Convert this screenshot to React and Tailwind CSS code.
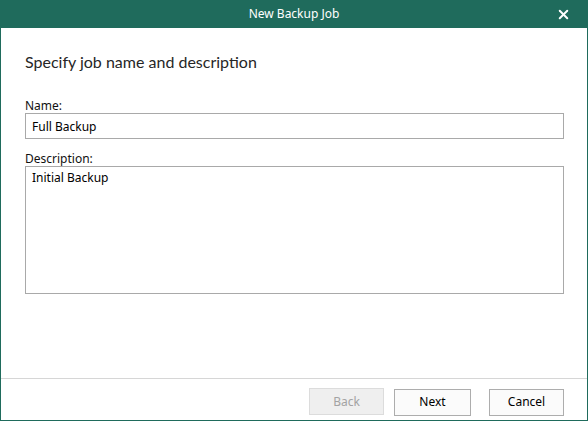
import { X } from "lucide-react";

const FONT = { fontFamily: '"Noto Sans", "Open Sans", sans-serif' };

function Button({ children, disabled, width }) {
  return (
    <button
      type="button"
      disabled={disabled}
      className={
        (disabled
          ? "h-[27px] border border-[#dcdcdc] bg-[#efefef] text-[12px] text-[#a3a3a3] "
          : "h-[27px] border border-[#adadad] bg-[#fbfbfb] text-[12px] text-black ") + width
      }
    >
      {children}
    </button>
  );
}

export default function App() {
  return (
    <div className="w-[588px] h-[421px] flex flex-col bg-white" style={FONT}>
      {/* Title bar */}
      <div className="relative h-[28px] shrink-0 bg-[#1f6b5c] flex items-center justify-center">
        <span className="text-[12px] text-white leading-none">New Backup Job</span>
        <X className="absolute right-[17px] top-[7px] w-[15px] h-[15px] text-white" strokeWidth={3.2} />
      </div>

      {/* Body */}
      <div className="flex-1 flex flex-col border-x border-b border-[#1f6b5c]">
        <div className="flex-1 pl-[24px] pr-[23px]">
          <h1
            className="mt-[22px] text-[16px] leading-[24px] font-normal text-[#262626]"
            style={{ fontFamily: 'Lato, "Noto Sans", sans-serif' }}
          >
            Specify job name and description
          </h1>

          <label className="block mt-[24px] text-[12px] leading-[15px] text-[#111]">Name:</label>
          <input
            readOnly
            defaultValue="Full Backup"
            className="block w-full h-[26px] border border-[#a9a9a9] px-[6px] text-[12px] text-black outline-none"
          />

          <label className="block mt-[12px] text-[12px] leading-[15px] text-[#111]">
            Description:
          </label>
          <textarea
            readOnly
            defaultValue="Initial Backup"
            className="block w-full h-[128px] border border-[#a9a9a9] px-[6px] pt-[3px] text-[12px] leading-[16px] text-black outline-none resize-none"
          />
        </div>

        {/* Footer */}
        <div className="h-[42px] shrink-0 border-t border-[#d6d6d6] flex items-start justify-end pt-[9px] pr-[23px]">
          <Button disabled width="w-[75px]">Back</Button>
          <div className="ml-[10px]">
            <Button width="w-[77px]">Next</Button>
          </div>
          <div className="ml-[18px]">
            <Button width="w-[75px]">Cancel</Button>
          </div>
        </div>
      </div>
    </div>
  );
}
